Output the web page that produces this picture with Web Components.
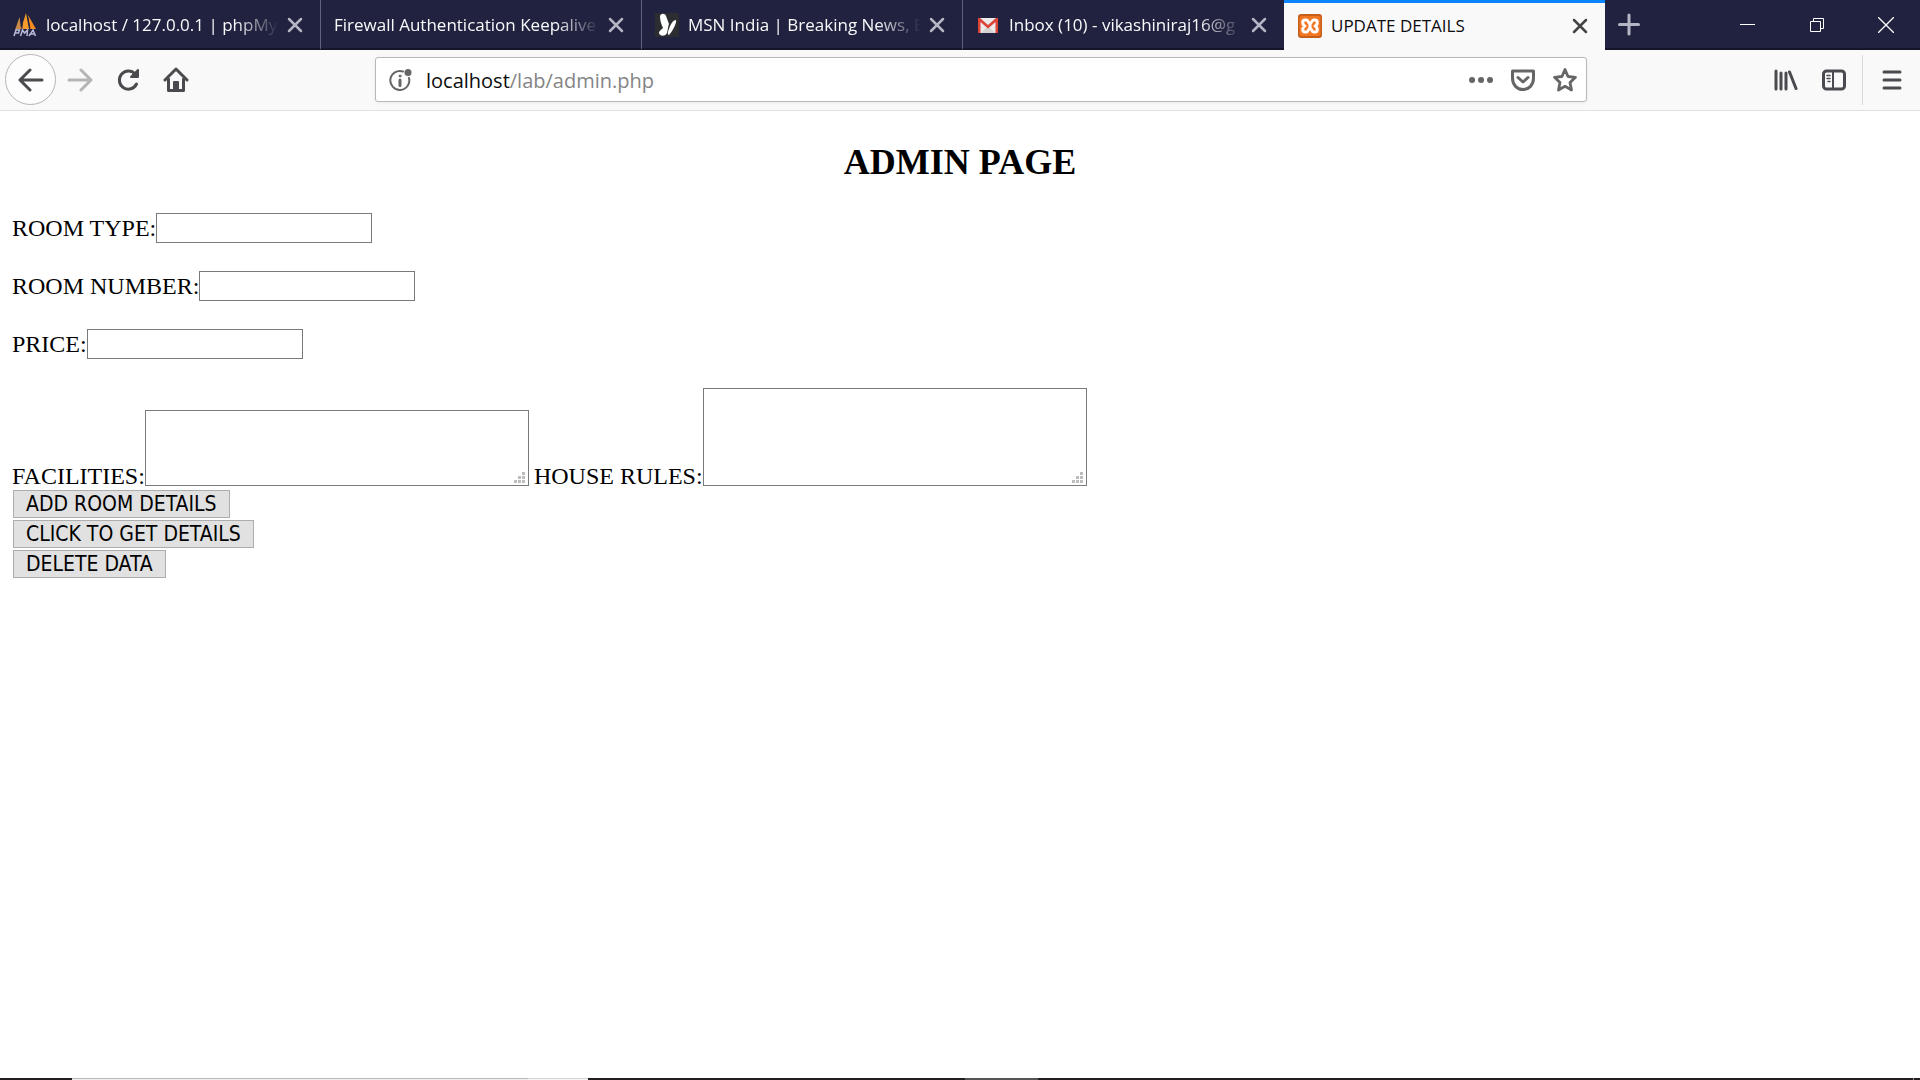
<!DOCTYPE html>
<html lang="en">
<head>
<meta charset="utf-8">
<title>UPDATE DETAILS</title>
<style>
html, body { height: 100%; }
body { margin: 0; background: #fff; }
</style>
</head>
<body>
<browser-window></browser-window>
<script>
const define = (name, html, setup) => {
  const tpl = document.createElement('template');
  tpl.innerHTML = html;
  customElements.define(name, class extends HTMLElement {
    connectedCallback() {
      if (this.shadowRoot) return;
      this.attachShadow({ mode: 'open' }).append(tpl.content.cloneNode(true));
      if (setup) setup(this, this.shadowRoot);
    }
  });
};

const favicons = {
  pma: '<path d="M2 17 6.500 4 8 16Z" fill="#c98a4a"/><path d="M8 16 13 0 16 16Z" fill="#f89c2b"/><path d="M15 2 23 16 17 16Z" fill="#f68b1f"/><path d="M9.500 4 9 16M15 5 17 16" stroke="#20223f" fill="none"/><path d="M1 23 3 17H6.500L5.500 20H2.500M7.500 23 9.500 17 11.500 20 14.500 17 14 23M16 23 20 17 22.500 23M17.500 21H22" fill="none" stroke="#b9bad8" stroke-width="1.500"/>',
  msn: '<path d="M0 0H24V24H0Z" fill="#2b2d30"/><path d="M5 3C6 0 10 0 11 3L14 11C13 13 13 16 12 20 11 23 5 24 4 20 4 18 7 16 8 15 6 11 5 7 5 3Z" fill="#fff"/><path d="M14 16C15 12 18 7 21 7 22 10 17 19 14 22 12 22 13 18 14 16Z" fill="#fff"/>',
  mail: '<path d="M2 5H22V20H2Z" fill="#eceaea"/><path d="M5 20 12 13 19 20Z" fill="#d6d3d3"/><path d="M2 20V5H4L12 12 20 5H22V20H19.500V9L12 15.500 4.500 9V20Z" fill="#db4437"/>',
  xampp: '<rect width="24" height="24" rx="3" fill="#c75f1c"/><rect x="1.500" y="2" width="21" height="20" rx="2" fill="#f37623"/><path d="M7 6H8.500C10.500 6 10 9.500 12 9.500S13.500 6 15.500 6H17C20 6 20 10 17.500 12 20 14 20 18 17 18H15.500C13.500 18 14 14.500 12 14.500S10.500 18 8.500 18H7C4 18 4 14 6.500 12 4 10 4 6 7 6Z" fill="none" stroke="#fff" stroke-width="3"/><path d="M12 9V15" stroke="#fff" stroke-width="3"/>'
};

define('browser-tab', `
<style>
:host { display: flex; flex: 0 1 321px; min-width: 0; height: 50px; box-sizing: border-box; align-items: center; padding: 2px 17px 0 13px; border-right: 1px solid #62637a; border-bottom: 2px solid #14152b; color: #f9f9fa; background: #20223f; font: 17px/24px "Open Sans", sans-serif; }
:host([last]) { border-right: 0; }
:host([active]) { border: 0; border-top: 3px solid #0a84ff; padding: 0 17px 2px 14px; background: #f9f9f9; color: #0c0c0d; }
svg.fav { flex: none; margin-right: 9px; }
.title { flex: 1; min-width: 0; overflow: hidden; white-space: nowrap; -webkit-mask-image: linear-gradient(to left, transparent, #000 44px); mask-image: linear-gradient(to left, transparent, #000 44px); }
:host([active]) .title { -webkit-mask-image: none; mask-image: none; }
button { flex: none; display: flex; border: 0; padding: 5px 0 5px 8px; background: none; color: #b5b6c3; }
:host([active]) button { color: #444; }
</style>
<svg class="fav" width="24" height="24" viewBox="0 0 24 24" aria-hidden="true"></svg>
<span class="title"><slot></slot></span>
<button aria-label="Close tab"><svg width="16" height="16" viewBox="0 0 16 16"><path d="M2 2 14 14M14 2 2 14" fill="none" stroke="currentColor" stroke-width="2.500" stroke-linecap="round"/></svg></button>
`, (host, root) => {
  const fav = root.querySelector('.fav');
  const name = host.getAttribute('icon');
  if (name) fav.innerHTML = favicons[name]; else fav.remove();
});

define('tab-strip', `
<style>
:host { display: flex; height: 50px; background: #20223f; box-shadow: inset 0 -2px #14152b; }
button { border: 0; padding: 0; background: none; color: #fff; display: grid; place-items: center; height: 50px; }
.new { width: 48px; color: #b5b6c3; }
.controls { display: flex; margin-left: auto; }
.controls button { width: 69px; }
</style>
<browser-tab icon="pma">localhost / 127.0.0.1 | phpMyA</browser-tab>
<browser-tab>Firewall Authentication Keepalive</browser-tab>
<browser-tab icon="msn">MSN India | Breaking News, E</browser-tab>
<browser-tab icon="mail" last>Inbox (10) - vikashiniraj16@g</browser-tab>
<browser-tab icon="xampp" active>UPDATE DETAILS</browser-tab>
<button class="new" aria-label="New tab"><svg width="22" height="24" viewBox="0 0 22 24"><path d="M11 2V21M1.500 11.500H20.500" stroke="currentColor" stroke-width="3" stroke-linecap="round"/></svg></button>
<div class="controls">
<button aria-label="Minimize"><svg width="16" height="16"><path d="M0 7.500H15" stroke="#fff"/></svg></button>
<button aria-label="Restore"><svg width="16" height="16"><path d="M1.500 4.500H11.500V14.500H1.500ZM4.500 4V1.500H14.500V11.500H12" fill="none" stroke="#fff"/></svg></button>
<button aria-label="Close window"><svg width="16" height="16"><path d="M0 0 16 16M16 0 0 16" stroke="#fff" stroke-width="1.300"/></svg></button>
</div>
`);

define('nav-bar', `
<style>
:host { display: flex; align-items: center; height: 61px; box-sizing: border-box; padding: 0 0 1px 5px; background: #f9f9f9; border-bottom: 1px solid #e0e0e0; color: #4a4a4f; }
button { border: 0; padding: 0; background: none; color: inherit; display: grid; place-items: center; flex: none; width: 48px; height: 50px; }
svg { fill: none; stroke: currentColor; stroke-width: 3; stroke-linecap: round; stroke-linejoin: round; }
.back { width: 51px; height: 51px; box-sizing: border-box; border: 1px solid #b5b5b5; border-radius: 50%; background: #fdfdfd; }
.fwd { color: #b5b5b5; }
.space { flex: 1 1 175px; max-width: 176px; }
.url { flex: 1 1 1212px; display: flex; align-items: center; height: 45px; box-sizing: border-box; border: 1px solid #b8b8b8; border-radius: 3px; background: #fff; box-shadow: 0 1px 4px rgba(0,0,0,.06); color: #666; }
.url .info { width: 50px; }
.url .act { width: 42px; }
.address { flex: 1; padding-top: 2px; font: 20px/28px "Open Sans", sans-serif; color: #858585; }
.address b { font-weight: 400; color: #0c0c0d; }
.menu { width: 58px; border-left: 1px solid #d9d9d9; margin-left: 4px; }
</style>
<button class="back" aria-label="Back"><svg width="26" height="24"><path d="M24 12H3M12 2 2 12 12 22"/></svg></button>
<button class="fwd" aria-label="Forward"><svg width="26" height="24"><path d="M2 12H23M14 2 24 12 14 22"/></svg></button>
<button aria-label="Reload"><svg width="24" height="24"><path d="M20.500 16A9 9 0 1 1 19 6"/><path d="M22 2V9H15Z" fill="currentColor" stroke-width="2"/></svg></button>
<button aria-label="Home"><svg width="26" height="26"><path d="M2 13 13 2 24 13M5.500 12V23.500H20.500V12"/><path d="M11 22V15H15V22Z" fill="currentColor" stroke-width="2"/></svg></button>
<div class="space"></div>
<div class="url">
<button class="info" aria-label="Site information"><svg width="24" height="24"><path d="M14 3.500A9.500 9.500 0 1 0 20 10" stroke-width="2"/><path d="M11 12V17.500" stroke-width="3"/><circle cx="11" cy="8" r="1" stroke-width="1"  fill="currentColor"/><circle cx="19" cy="4.500" r="3.500" fill="currentColor" stroke="none"/></svg></button>
<span class="address"><b>localhost</b>/lab/admin.php</span>
<button class="act" aria-label="Page actions"><svg width="24" height="8"><path d="M3 4H3.100M12 4H12.100M21 4H21.100" stroke-width="6"/></svg></button>
<button class="act" aria-label="Save to Pocket"><svg width="26" height="24"><path d="M2.500 3H23.500V10C23.500 17 19 21.500 13 21.500S2.500 17 2.500 10ZM8 9.500 13 14 18 9.500"/></svg></button>
<button class="act" aria-label="Bookmark"><svg width="26" height="26"><path d="M13 2.500 16 9.500 23.500 10.300 18 15.500 19.500 23 13 19.300 6.500 23 8 15.500 2.500 10.300 10 9.500Z" stroke-width="2.800"/></svg></button>
</div>
<div class="space"></div>
<button aria-label="Library"><svg width="26" height="24"><path d="M3 3V21M8 5V21M13 5V21M16.500 4 23 20.500"/></svg></button>
<button aria-label="Sidebars"><svg width="26" height="24"><rect x="2.500" y="3" width="21" height="18" rx="3"/><path d="M12 3V21" stroke-width="2"/><path d="M6 7.500H9M6 10.500H9M7 13.500H9" stroke-width="1.500"/></svg></button>
<button class="menu" aria-label="Menu"><svg width="20" height="22"><path d="M2 3H18M2 11H18M2 19H18"/></svg></button>
`);

define('text-field', `
<style>
:host { display: inline; }
input, textarea { box-sizing: border-box; margin: 0; border: 1px solid #7a7a7a; border-radius: 0; background: #fff; font: 20px/22px "Noto Sans", sans-serif; outline: 0; }
input { width: 216px; height: 30px; padding: 2px 4px; vertical-align: top; }
.area { display: inline-block; position: relative; vertical-align: -2px; }
textarea { display: block; width: 384px; padding: 4px; resize: none; overflow: hidden; }
.grip { position: absolute; right: 4px; bottom: 3px; pointer-events: none; }
</style>
<label for="f"></label>`, (host, root) => {
  root.querySelector('label').textContent = host.getAttribute('label');
  const rows = +host.getAttribute('rows');
  if (!rows) { root.innerHTML += '<input id="f" type="text">'; return; }
  root.innerHTML += '<span class="area"><textarea id="f"></textarea><svg class="grip" width="11" height="11" fill="#bdbdbd"><path d="M8 0h3v3h-3zM4 4h3v3h-3zM8 4h3v3h-3zM0 8h3v3h-3zM4 8h3v3h-3zM8 8h3v3h-3z"/></svg></span>';
  root.querySelector('textarea').style.height = rows * 22 + 10 + 'px';
});

define('admin-page', `
<style>
:host { display: block; padding: 0 12px; font: 24px/28px "Liberation Serif", serif; color: #000; }
h2 { margin: 30px 0; font-size: 36px; line-height: 42px; text-align: center; }
.row { height: 30px; line-height: 30px; margin-bottom: 28px; }
.areas { display: flex; align-items: flex-end; gap: 5px; margin-top: 29px; }
.actions { display: flex; flex-direction: column; align-items: flex-start; gap: 2px; padding-left: 1px; }
button { height: 28px; box-sizing: border-box; border: 1px solid #adadad; background: #e1e1e1; color: #000; padding: 0 12px; font: 21px/26px "DejaVu Sans Condensed", "Noto Sans", sans-serif; }
</style>
<h2>ADMIN PAGE</h2>
<div class="row"><text-field label="ROOM TYPE:"></text-field></div>
<div class="row"><text-field label="ROOM NUMBER:"></text-field></div>
<div class="row"><text-field label="PRICE:"></text-field></div>
<div class="areas"><div><text-field label="FACILITIES:" rows="3"></text-field></div><div><text-field label="HOUSE RULES:" rows="4"></text-field></div></div>
<div class="actions"><button>ADD ROOM DETAILS</button><button>CLICK TO GET DETAILS</button><button>DELETE DATA</button></div>
`);

define('task-edge', `
<style>
:host { display: flex; height: 2px; background: #231f20; }
.a { width: 72px; } .b { width: 456px; background: #f0f0f0; box-shadow: inset 0 1px #b8b8b8; } .c { width: 60px; background: #f5f5f5; box-shadow: inset 0 1px #d5d5d5; }
.d { width: 377px; } .e { width: 73px; background: #555; } .f { flex: 1; } .g { width: 1px; background: #888; margin-right: 6px; }
</style>
<i class="a"></i><i class="b"></i><i class="c"></i><i class="d"></i><i class="e"></i><i class="f"></i><i class="g"></i>`);

define('browser-window', `
<style>
:host { display: flex; flex-direction: column; height: 100%; overflow: hidden; }
tab-strip, nav-bar, task-edge { flex: none; }
admin-page { flex: 1; }
</style>
<tab-strip></tab-strip><nav-bar></nav-bar><admin-page></admin-page><task-edge></task-edge>`);
</script>
</body>
</html>
